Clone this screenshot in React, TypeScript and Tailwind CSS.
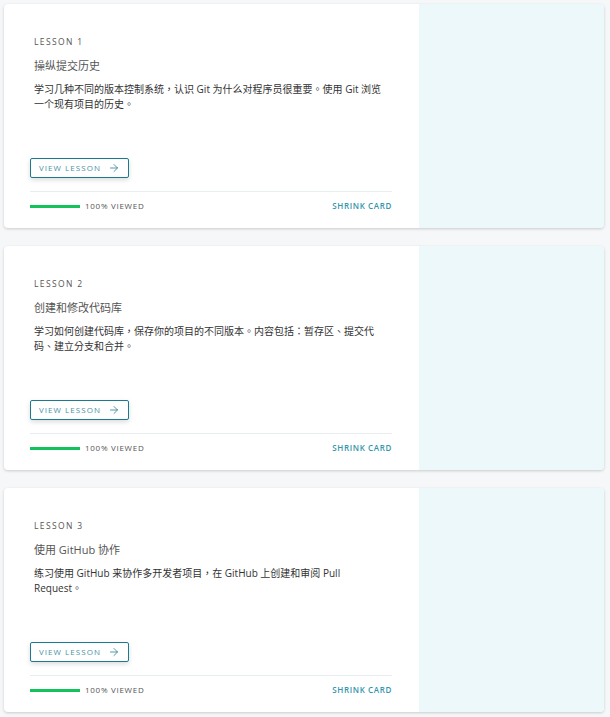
import { ArrowRight } from 'lucide-react';

interface Lesson {
    id: number;
    title: string;
    description: string;
}

const lessons: Lesson[] = [
    {
        id: 1,
        title: '操纵提交历史',
        description: '学习几种不同的版本控制系统，认识 Git 为什么对程序员很重要。使用 Git 浏览一个现有项目的历史。',
    },
    {
        id: 2,
        title: '创建和修改代码库',
        description: '学习如何创建代码库，保存你的项目的不同版本。内容包括：暂存区、提交代码、建立分支和合并。',
    },
    {
        id: 3,
        title: '使用 GitHub 协作',
        description: '练习使用 GitHub 来协作多开发者项目，在 GitHub 上创建和审阅 Pull Request。',
    },
];

function LessonCard({ lesson }: { lesson: Lesson }) {
    return (
        <div className="flex h-[224px] w-[600px] rounded-[4px] bg-white shadow-[0_1px_3px_rgba(0,0,0,0.18)] overflow-hidden">
            {/* Text side */}
            <div className="flex w-[415px] flex-col pl-[26px] pr-[27px] pt-[32px] pb-[16px]">
                <div className="pl-[4px]">
                    <div className="text-[8.5px] leading-[12px] tracking-[0.16em] text-[#555]">LESSON {lesson.id}</div>
                    <h2 className="mt-[10px] text-[11px] leading-[16px] text-[#555]">{lesson.title}</h2>
                    <p className="mt-[8px] w-[356px] text-[10px] leading-[15px] text-[#333]">{lesson.description}</p>
                </div>

                <div className="mt-auto">
                    <button className="flex h-[20px] w-[99px] items-center gap-[7px] rounded-[2px] border border-[#1b7a8f] bg-white pl-[8px] shadow-[0_2px_5px_rgba(0,0,0,0.14)]">
                        <span className="text-[8px] font-medium tracking-[0.13em] text-[#4a93a6]">VIEW LESSON</span>
                        <ArrowRight size={12} strokeWidth={1.5} className="text-[#1b7a8f]" />
                    </button>
                    <div className="mt-[13px] h-px bg-[#e8eef0]" />
                    <div className="mt-[8px] flex h-[12px] items-center justify-between">
                        <div className="flex items-center gap-[5px]">
                            <div className="h-[3px] w-[50px] bg-[#14c25c]" />
                            <span className="text-[8px] font-medium tracking-[0.09em] text-[#555]">100% VIEWED</span>
                        </div>
                        <span className="text-[8px] font-semibold tracking-[0.08em] text-[#3396ac]">SHRINK CARD</span>
                    </div>
                </div>
            </div>

            {/* Image side */}
            <div className="flex-1 bg-[#ecf8fa]" />
        </div>
    );
}

export default function App() {
    return (
        <div
            className="min-h-[717px] bg-[#f5f7f8] px-[4px] pt-[4px]"
            style={{ fontFamily: '"Open Sans", "Noto Sans CJK TC", sans-serif' }}
        >
            <div className="flex flex-col gap-[18px]">
                {lessons.map((lesson) => (
                    <LessonCard key={lesson.id} lesson={lesson} />
                ))}
            </div>
        </div>
    );
}
